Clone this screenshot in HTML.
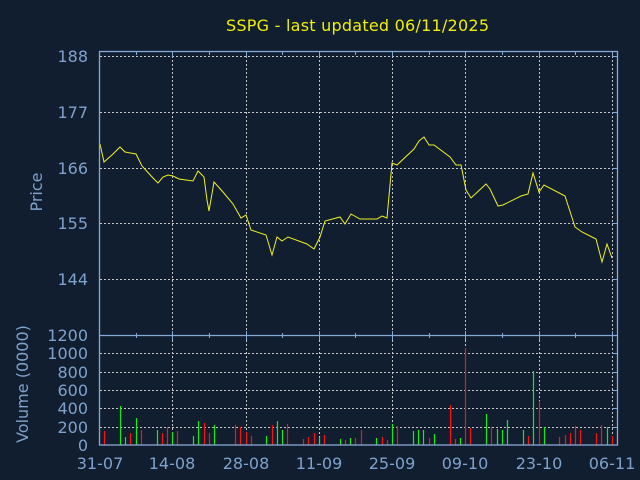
<!DOCTYPE html>
<html><head><meta charset="utf-8"><style>
html,body{margin:0;padding:0;background:#111e2f;}
svg{display:block}
text{font-family:"DejaVu Sans","Liberation Sans",sans-serif;}
</style></head><body>
<svg width="640" height="480" viewBox="0 0 640 480" xmlns="http://www.w3.org/2000/svg">
<rect width="640" height="480" fill="#111e2f"/>
<text x="226" y="31" font-size="16" fill="#f0f000" textLength="263">SSPG - last updated 06/11/2025</text>
<g stroke="#c8c8c8" stroke-width="1" stroke-dasharray="2,2" fill="none">
<line x1="100" y1="56.5" x2="617" y2="56.5"/>
<line x1="100" y1="112.5" x2="617" y2="112.5"/>
<line x1="100" y1="168.5" x2="617" y2="168.5"/>
<line x1="100" y1="223.5" x2="617" y2="223.5"/>
<line x1="100" y1="279.5" x2="617" y2="279.5"/>
<line x1="100" y1="353.5" x2="617" y2="353.5"/>
<line x1="100" y1="372.5" x2="617" y2="372.5"/>
<line x1="100" y1="390.5" x2="617" y2="390.5"/>
<line x1="100" y1="408.5" x2="617" y2="408.5"/>
<line x1="100" y1="427.5" x2="617" y2="427.5"/>
<line x1="172.5" y1="52" x2="172.5" y2="445"/>
<line x1="246.5" y1="52" x2="246.5" y2="445"/>
<line x1="319.5" y1="52" x2="319.5" y2="445"/>
<line x1="392.5" y1="52" x2="392.5" y2="445"/>
<line x1="465.5" y1="52" x2="465.5" y2="445"/>
<line x1="539.5" y1="52" x2="539.5" y2="445"/>
<line x1="612.5" y1="52" x2="612.5" y2="445"/>
</g>
<g stroke-width="1.2">
<g stroke="#ff1010">
<line x1="104.5" y1="445" x2="104.5" y2="431"/><line x1="130.5" y1="445" x2="130.5" y2="433"/><line x1="141.5" y1="445" x2="141.5" y2="430"/><line x1="162.5" y1="445" x2="162.5" y2="433"/><line x1="167.5" y1="445" x2="167.5" y2="427"/><line x1="177.5" y1="445" x2="177.5" y2="431"/><line x1="204.5" y1="445" x2="204.5" y2="423"/><line x1="209.5" y1="445" x2="209.5" y2="433"/><line x1="235.5" y1="445" x2="235.5" y2="425"/><line x1="240.5" y1="445" x2="240.5" y2="427"/><line x1="246.5" y1="445" x2="246.5" y2="432"/><line x1="251.5" y1="445" x2="251.5" y2="436"/><line x1="272.5" y1="445" x2="272.5" y2="425"/><line x1="287.5" y1="445" x2="287.5" y2="424"/><line x1="303.5" y1="445" x2="303.5" y2="439"/><line x1="308.5" y1="445" x2="308.5" y2="437"/><line x1="314.5" y1="445" x2="314.5" y2="433"/><line x1="324.5" y1="445" x2="324.5" y2="435"/><line x1="345.5" y1="445" x2="345.5" y2="440"/><line x1="355.5" y1="445" x2="355.5" y2="438"/><line x1="361.5" y1="445" x2="361.5" y2="430"/><line x1="382.5" y1="445" x2="382.5" y2="437"/><line x1="387.5" y1="445" x2="387.5" y2="440"/><line x1="397.5" y1="445" x2="397.5" y2="426"/><line x1="429.5" y1="445" x2="429.5" y2="438"/><line x1="450.5" y1="445" x2="450.5" y2="405"/><line x1="455.5" y1="445" x2="455.5" y2="439"/><line x1="465.5" y1="445" x2="465.5" y2="348"/><line x1="470.5" y1="445" x2="470.5" y2="428"/><line x1="491.5" y1="445" x2="491.5" y2="427"/><line x1="528.5" y1="445" x2="528.5" y2="436"/><line x1="539.5" y1="445" x2="539.5" y2="401"/><line x1="559.5" y1="445" x2="559.5" y2="437"/><line x1="565.5" y1="445" x2="565.5" y2="435"/><line x1="570.5" y1="445" x2="570.5" y2="433"/><line x1="575.5" y1="445" x2="575.5" y2="426"/><line x1="580.5" y1="445" x2="580.5" y2="430"/><line x1="596.5" y1="445" x2="596.5" y2="433"/><line x1="601.5" y1="445" x2="601.5" y2="425"/><line x1="612.5" y1="445" x2="612.5" y2="436"/>
</g>
<g stroke="#10ee10">
<line x1="120.5" y1="445" x2="120.5" y2="406"/><line x1="125.5" y1="445" x2="125.5" y2="437"/><line x1="136.5" y1="445" x2="136.5" y2="418"/><line x1="157.5" y1="445" x2="157.5" y2="430"/><line x1="172.5" y1="445" x2="172.5" y2="432"/><line x1="193.5" y1="445" x2="193.5" y2="436"/><line x1="198.5" y1="445" x2="198.5" y2="421"/><line x1="214.5" y1="445" x2="214.5" y2="425"/><line x1="266.5" y1="445" x2="266.5" y2="436"/><line x1="277.5" y1="445" x2="277.5" y2="421"/><line x1="282.5" y1="445" x2="282.5" y2="430"/><line x1="319.5" y1="445" x2="319.5" y2="437"/><line x1="340.5" y1="445" x2="340.5" y2="439"/><line x1="350.5" y1="445" x2="350.5" y2="438"/><line x1="376.5" y1="445" x2="376.5" y2="438"/><line x1="392.5" y1="445" x2="392.5" y2="424"/><line x1="413.5" y1="445" x2="413.5" y2="431"/><line x1="418.5" y1="445" x2="418.5" y2="430"/><line x1="423.5" y1="445" x2="423.5" y2="430"/><line x1="434.5" y1="445" x2="434.5" y2="434"/><line x1="460.5" y1="445" x2="460.5" y2="438"/><line x1="486.5" y1="445" x2="486.5" y2="414"/><line x1="497.5" y1="445" x2="497.5" y2="429"/><line x1="502.5" y1="445" x2="502.5" y2="430"/><line x1="507.5" y1="445" x2="507.5" y2="420"/><line x1="523.5" y1="445" x2="523.5" y2="430"/><line x1="533.5" y1="445" x2="533.5" y2="371"/><line x1="544.5" y1="445" x2="544.5" y2="427"/><line x1="607.5" y1="445" x2="607.5" y2="427"/>
</g>
</g>
<polyline fill="none" stroke="#f0f020" stroke-width="1" points="100,144 104,162 113,154 120,147 125,152 136,154 142,166 153,178 158,183 163,177 168,175 173,176 179,179 186,180 193,181 198,171 204,177 207,200 209,211 214,182 223,192 233,204 241,218 246,215 251,230 266,235 272,255 277,237 282,241 288,237 307,244 314,249 320,237 325,221 340,217 345,224 351,214 360,219 377,219 382,216 387,218 392,163 397,165 414,149 419,141 424,137 429,145 434,145 450,157 456,165 461,165 466,190 471,198 486,184 490,189 498,206 503,205 521,196 528,194 533,173 539,192 544,185 565,196 575,227 582,232 596,239 602,262 607,244 612,258"/>
<g stroke="#88aad8" stroke-width="1.3" fill="none">
<rect x="99.5" y="51.5" width="518" height="393.5"/>
<line x1="99.5" y1="335.5" x2="617.5" y2="335.5"/>
</g>
<g stroke="#88aad8" stroke-width="1">
<line x1="136.5" y1="52" x2="136.5" y2="55"/><line x1="172.5" y1="52" x2="172.5" y2="57"/><line x1="209.5" y1="52" x2="209.5" y2="55"/><line x1="246.5" y1="52" x2="246.5" y2="57"/><line x1="282.5" y1="52" x2="282.5" y2="55"/><line x1="319.5" y1="52" x2="319.5" y2="57"/><line x1="355.5" y1="52" x2="355.5" y2="55"/><line x1="392.5" y1="52" x2="392.5" y2="57"/><line x1="429.5" y1="52" x2="429.5" y2="55"/><line x1="465.5" y1="52" x2="465.5" y2="57"/><line x1="502.5" y1="52" x2="502.5" y2="55"/><line x1="539.5" y1="52" x2="539.5" y2="57"/><line x1="575.5" y1="52" x2="575.5" y2="55"/><line x1="612.5" y1="52" x2="612.5" y2="57"/>
<line x1="136.5" y1="333" x2="136.5" y2="338"/><line x1="172.5" y1="331" x2="172.5" y2="340"/><line x1="209.5" y1="333" x2="209.5" y2="338"/><line x1="246.5" y1="331" x2="246.5" y2="340"/><line x1="282.5" y1="333" x2="282.5" y2="338"/><line x1="319.5" y1="331" x2="319.5" y2="340"/><line x1="355.5" y1="333" x2="355.5" y2="338"/><line x1="392.5" y1="331" x2="392.5" y2="340"/><line x1="429.5" y1="333" x2="429.5" y2="338"/><line x1="465.5" y1="331" x2="465.5" y2="340"/><line x1="502.5" y1="333" x2="502.5" y2="338"/><line x1="539.5" y1="331" x2="539.5" y2="340"/><line x1="575.5" y1="333" x2="575.5" y2="338"/><line x1="612.5" y1="331" x2="612.5" y2="340"/>
<line x1="612" y1="56.5" x2="617" y2="56.5"/><line x1="612" y1="112.5" x2="617" y2="112.5"/><line x1="612" y1="168.5" x2="617" y2="168.5"/><line x1="612" y1="223.5" x2="617" y2="223.5"/><line x1="612" y1="279.5" x2="617" y2="279.5"/>
<line x1="612" y1="353.5" x2="617" y2="353.5"/><line x1="612" y1="372.5" x2="617" y2="372.5"/><line x1="612" y1="390.5" x2="617" y2="390.5"/><line x1="612" y1="408.5" x2="617" y2="408.5"/><line x1="612" y1="427.5" x2="617" y2="427.5"/>
</g>
<g font-size="16" fill="#7fa2cc" text-anchor="end">
<text x="88" y="62">188</text><text x="88" y="118">177</text><text x="88" y="174">166</text><text x="88" y="229">155</text><text x="88" y="285">144</text>
<text x="88" y="341">1200</text><text x="88" y="359">1000</text><text x="88" y="378">800</text><text x="88" y="396">600</text><text x="88" y="414">400</text><text x="88" y="433">200</text><text x="88" y="451">0</text>
</g>
<g font-size="16" fill="#7fa2cc" text-anchor="middle">
<text x="100" y="469">31-07</text><text x="172" y="469">14-08</text><text x="246" y="469">28-08</text><text x="319" y="469">11-09</text><text x="392" y="469">25-09</text><text x="465" y="469">09-10</text><text x="539" y="469">23-10</text><text x="612" y="469">06-11</text>
</g>
<text transform="translate(42,192) rotate(-90)" font-size="16" fill="#7fa2cc" text-anchor="middle">Price</text>
<text transform="translate(28,384) rotate(-90)" font-size="16" fill="#7fa2cc" text-anchor="middle">Volume (0000)</text>
</svg>
</body></html>
